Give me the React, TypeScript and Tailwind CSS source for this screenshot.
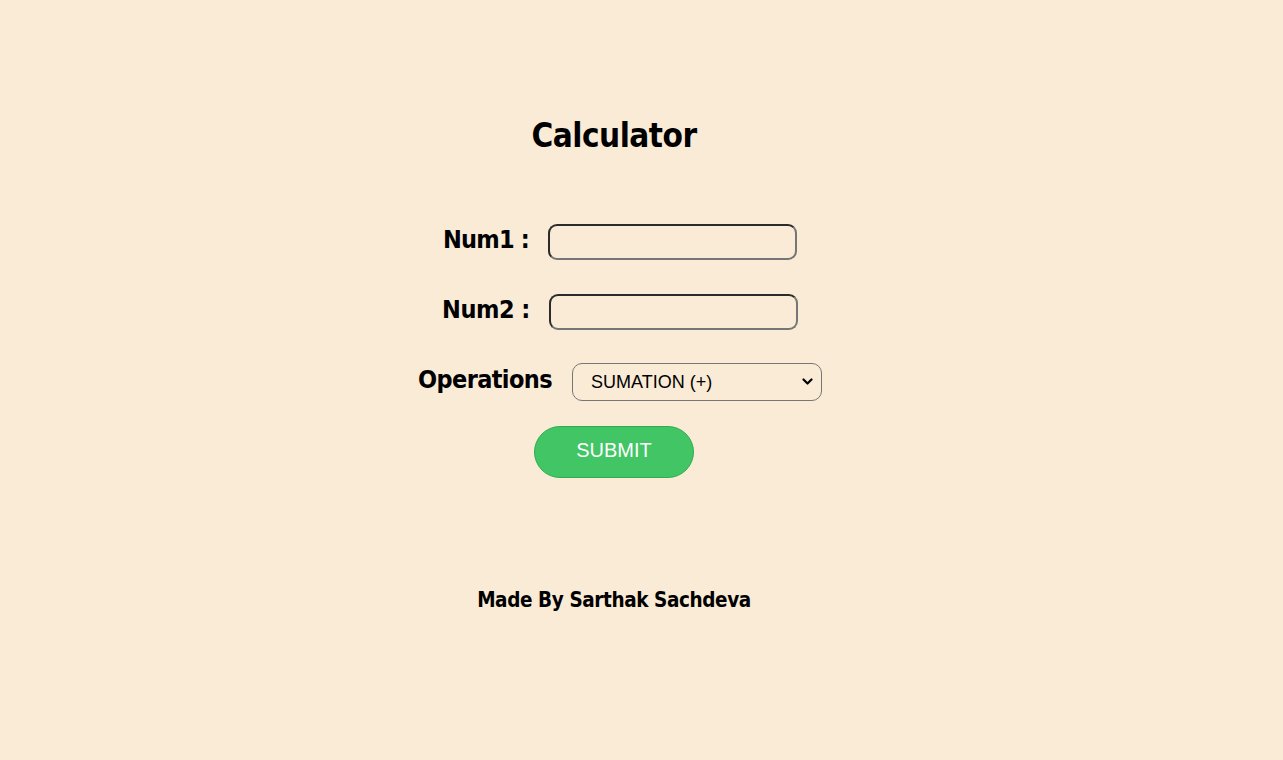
import { useState } from "react";

const display = "font-['DejaVu_Sans_Condensed','DejaVu_Sans',sans-serif] font-bold";

export default function App() {
  const [a, setA] = useState("");
  const [b, setB] = useState("");
  const [op, setOp] = useState("add");

  return (
    <main className="min-h-screen bg-[#faebd7] pt-[106px] pr-[55px] text-black">
      <div className="flex flex-col items-center">
        <h1 className={`${display} flex h-[60px] items-center text-[33px] tracking-[-0.5px]`}>
          Calculator
        </h1>

        <form className="mt-[41px] flex flex-col items-center" onSubmit={(e) => e.preventDefault()}>
          <div className="ml-[12px] flex h-[70px] items-center gap-[19px]">
            <label className={`${display} pb-[4px] text-[25px] tracking-[-0.8px]`}>Num1 :</label>
            <input
              value={a}
              onChange={(e) => setA(e.target.value)}
              className="h-[36px] w-[249px] rounded-[9px] border-2 border-t-[#2b2b2b] border-l-[#2b2b2b] border-r-[#767676] border-b-[#767676] bg-transparent px-2 outline-none"
            />
          </div>
          <div className="ml-[12px] flex h-[70px] items-center gap-[19px]">
            <label className={`${display} pb-[4px] text-[25px] tracking-[-0.5px]`}>Num2 :</label>
            <input
              value={b}
              onChange={(e) => setB(e.target.value)}
              className="h-[36px] w-[249px] rounded-[9px] border-2 border-t-[#2b2b2b] border-l-[#2b2b2b] border-r-[#767676] border-b-[#767676] bg-transparent px-2 outline-none"
            />
          </div>
          <div className="ml-[12px] flex h-[70px] items-center gap-[20px]">
            <label className={`${display} pb-[4px] text-[25px] tracking-[-0.6px]`}>Operations</label>
            <div className="relative">
              <select
                value={op}
                onChange={(e) => setOp(e.target.value)}
                className="h-[38px] w-[250px] appearance-none rounded-[10px] border border-[#767676] bg-transparent pl-[18px] font-['Liberation_Sans',Arial,sans-serif] text-[18px] text-black outline-none"
              >
                <option value="add">SUMATION (+)</option>
                <option value="sub">SUBTRACTION (-)</option>
                <option value="mul">MULTIPLICATION (*)</option>
                <option value="div">DIVISION (/)</option>
              </select>
              <svg
                className="pointer-events-none absolute right-[9px] top-[15px]"
                width="11"
                height="8"
                viewBox="0 0 11 8"
                fill="none"
              >
                <path d="M1.5 1.5 L5.5 5.5 L9.5 1.5" stroke="#000" strokeWidth="2.2" strokeLinecap="round" strokeLinejoin="round" />
              </svg>
            </div>
          </div>
          <div className="flex h-[70px] items-center">
            <button
              type="submit"
              className="h-[52px] w-[160px] rounded-full border border-[#2fae50] bg-[#41c565] pb-[4px] font-['Liberation_Sans',Arial,sans-serif] text-[20px] text-white"
            >
              SUBMIT
            </button>
          </div>
        </form>

        <footer className={`${display} mt-[93px] flex h-[40px] items-center text-[20.5px] tracking-[-0.4px]`}>
          Made By Sarthak Sachdeva
        </footer>
      </div>
    </main>
  );
}
